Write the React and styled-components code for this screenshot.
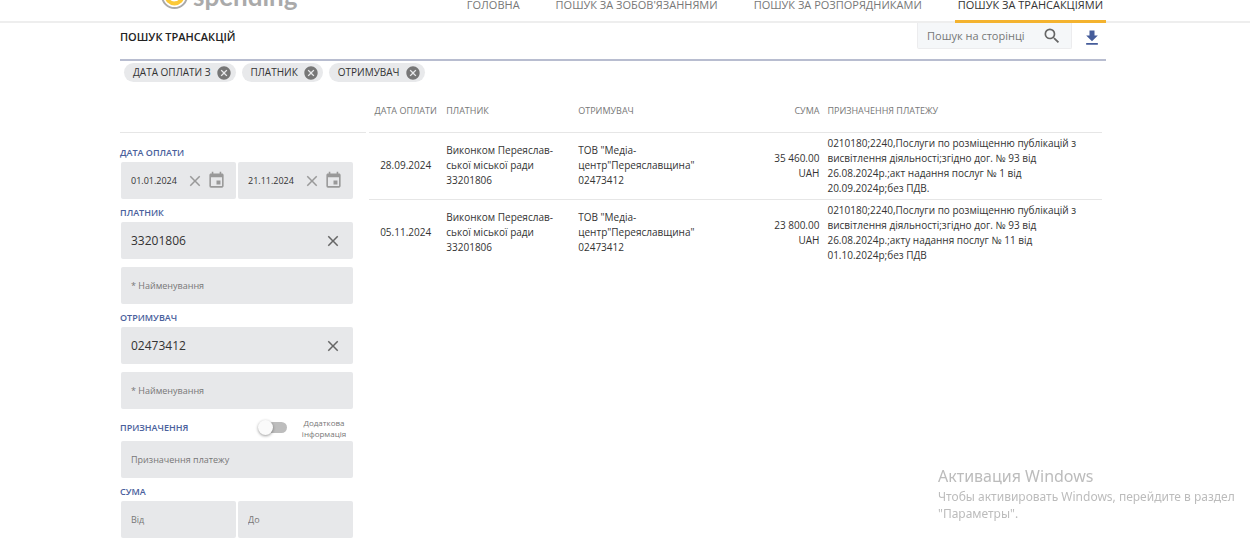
import React, { useState } from 'react';
import styled, { createGlobalStyle } from 'styled-components';
import { MdCancel, MdClose, MdEvent, MdFileDownload, MdSearch } from 'react-icons/md';

const GlobalStyle = createGlobalStyle`
  *, *::before, *::after { box-sizing: border-box; }
  body {
    margin: 0;
    background: #fff;
    color: #333;
    font-family: "Open Sans", "Noto Sans", sans-serif;
    font-size: 10px;
    line-height: 15px;
  }
  button, input { font-family: inherit; }
`;

const Header = styled.header`
  display: flex;
  align-items: flex-end;
  justify-content: space-between;
  height: 23px;
  padding: 0 144px 0 160px;
  overflow: hidden;
  background: #fff;
  box-shadow: inset 0 -2px #eee;
`;

const Brand = styled.a`
  display: flex;
  align-items: center;
  gap: 4px;
  padding-bottom: 13px;
  color: #aaa;
  font-family: Lato, sans-serif;
  font-size: 26px;
  font-weight: 700;
  line-height: 26px;
  text-decoration: none;
  svg { flex: none; }
`;

const Nav = styled.nav`
  display: flex;
  gap: 30px;
`;

const NavLink = styled.a`
  padding: 0 3px 9px;
  border-bottom: 3px solid ${(p) => (p.$active ? '#f4b32f' : 'transparent')};
  color: ${(p) => (p.$active ? '#333' : '#777')};
  font-size: 11px;
  line-height: 12px;
  text-decoration: none;
  white-space: nowrap;
`;

const Page = styled.main`
  padding: 0 144px 0 120px;
`;

const TitleBar = styled.div`
  display: flex;
  align-items: flex-start;
  height: 38px;
  border-bottom: 2px solid #b8bdd0;
`;

const Title = styled.h1`
  flex: 1;
  margin: 0;
  padding-top: 6px;
  color: #222;
  font-size: 11px;
  font-weight: 600;
  line-height: 16px;
`;

const SearchBox = styled.label`
  display: flex;
  align-items: center;
  width: 155px;
  height: 26px;
  padding: 0 9px;
  background: #f5f7f9;
  border: 1px solid #ececee;
  border-top: 0;
  border-radius: 0 0 2px 2px;
  color: #666;
`;

const SearchInput = styled.input`
  flex: 1;
  min-width: 0;
  padding: 0;
  border: 0;
  outline: 0;
  background: none;
  font-size: 11px;
  &::placeholder { color: #777; opacity: 1; }
`;

const IconButton = styled.button`
  display: flex;
  flex: none;
  padding: 0;
  border: 0;
  background: none;
  color: ${(p) => p.$color || '#666'};
  cursor: pointer;
`;

const Download = styled(IconButton)`
  padding: 5px 4px 0 10px;
`;

const Chips = styled.div`
  display: flex;
  gap: 6px;
  padding: 2px 4px 0;
`;

const Chip = styled.span`
  display: flex;
  align-items: center;
  gap: 5px;
  height: 19px;
  padding: 0 4px 0 9px;
  border-radius: 10px;
  background: #e8e9eb;
  color: #333;
  font-size: 10px;
`;

const Columns = styled.div`
  display: flex;
  gap: 3px;
  padding-right: 4px;
`;

const Sidebar = styled.form`
  flex: none;
  width: 246px;
  padding-top: 50px;
`;

const Filters = styled.div`
  display: flex;
  flex-direction: column;
  padding: 12px 13px 8px 1px;
  border-top: 1px solid #e6e6e6;
`;

const Group = styled.section`
  display: flex;
  flex-direction: column;
  gap: 8px;
  & + & { margin-top: 6px; }
`;

const GroupHead = styled.div`
  display: flex;
  align-items: center;
  margin: 0 0 -7px -1px;
  min-height: ${(p) => (p.$tall ? '25px' : '16px')};
`;

const GroupTitle = styled.h2`
  flex: 1;
  margin: 0;
  color: #4a609c;
  font-size: 9px;
  font-weight: 600;
  line-height: 16px;
`;

const Pair = styled.div`
  display: grid;
  grid-template-columns: 1fr 1fr;
  gap: 2px;
`;

const Field = styled.div`
  display: flex;
  align-items: center;
  gap: 3px;
  height: 37px;
  padding: 0 ${(p) => (p.$date ? '10px' : '11px')} 0 10px;
  border-radius: 2px;
  background: #e7e8ea;
`;

const Input = styled.input`
  flex: 1;
  min-width: 0;
  width: 0;
  padding: 0;
  border: 0;
  outline: 0;
  background: none;
  color: #333;
  font-size: ${(p) => p.$size || 9}px;
  &::placeholder { color: #777; opacity: 1; }
`;

const SwitchLabel = styled.label`
  display: flex;
  align-items: center;
  gap: 14px;
  color: #777;
  font-size: 8px;
  line-height: 11px;
  text-align: center;
  span { width: 46px; margin-right: 6px; }
`;

const Switch = styled.input`
  appearance: none;
  display: flex;
  align-items: center;
  width: 26px;
  height: 11px;
  margin: 0;
  border-radius: 6px;
  background: #bdbdbd;
  &::before {
    content: "";
    flex: none;
    width: 15px;
    height: 15px;
    margin: 0 -3px;
    border-radius: 50%;
    background: #fafafa;
    box-shadow: 0 1px 3px rgba(0, 0, 0, 0.4);
  }
  &:checked { justify-content: flex-end; }
`;

const TableWrap = styled.div`
  flex: 1;
  min-width: 0;
`;

const Table = styled.table`
  width: 100%;
  border-collapse: collapse;
  table-layout: fixed;
`;

const Th = styled.th`
  width: ${(p) => p.$w || 'auto'};
  height: 50px;
  padding: 8px 4px 0;
  border-bottom: 1px solid #e6e6e6;
  color: #777;
  font-size: 9px;
  font-weight: 400;
  text-align: ${(p) => p.$align || 'left'};
  white-space: nowrap;
`;

const Td = styled.td`
  padding: 3px 4px;
  text-align: ${(p) => p.$align || 'left'};
  vertical-align: middle;
  tr + tr > & { border-top: 1px solid #e6e6e6; }
`;

const Activation = styled.aside`
  position: fixed;
  right: 8px;
  bottom: 26px;
  width: 304px;
  color: #bcbcbc;
  font-family: "Noto Sans", sans-serif;
  font-size: 12px;
  line-height: 17px;
  pointer-events: none;
  strong {
    display: block;
    font-size: 16px;
    font-weight: 400;
    line-height: 24px;
  }
`;

const navItems = ['ГОЛОВНА', "ПОШУК ЗА ЗОБОВ'ЯЗАННЯМИ", 'ПОШУК ЗА РОЗПОРЯДНИКАМИ', 'ПОШУК ЗА ТРАНСАКЦІЯМИ'];
const chips = ['ДАТА ОПЛАТИ З', 'ПЛАТНИК', 'ОТРИМУВАЧ'];
const payments = [
  {
    date: '28.09.2024',
    sum: '35\u00a0460.00 UAH',
    purpose: '0210180;2240,Послуги по розміщенню публікацій з висвітлення діяльності;згідно дог. № 93 від 26.08.2024р.;акт надання послуг № 1 від 20.09.2024р;без ПДВ.',
  },
  {
    date: '05.11.2024',
    sum: '23\u00a0800.00 UAH',
    purpose: '0210180;2240,Послуги по розміщенню публікацій з висвітлення діяльності;згідно дог. № 93 від 26.08.2024р.;акту надання послуг № 11 від 01.10.2024р;без ПДВ',
  },
];

function DateField({ label, initial }) {
  const [value, setValue] = useState(initial);
  return (
    <Field $date>
      <Input aria-label={label} value={value} onChange={(e) => setValue(e.target.value)} />
      <IconButton type="button" aria-label="Очистити" $color="#999" onClick={() => setValue('')}><MdClose size={18} /></IconButton>
      <IconButton type="button" aria-label="Календар" $color="#999"><MdEvent size={19} /></IconButton>
    </Field>
  );
}

function CodeField({ label, initial }) {
  const [value, setValue] = useState(initial);
  return (
    <Field>
      <Input $size={12} aria-label={label} value={value} onChange={(e) => setValue(e.target.value)} />
      <IconButton type="button" aria-label="Очистити" onClick={() => setValue('')}><MdClose size={18} /></IconButton>
    </Field>
  );
}

function TextField({ placeholder }) {
  return <Field><Input aria-label={placeholder} placeholder={placeholder} /></Field>;
}

export default function App() {
  return (
    <>
      <GlobalStyle />
      <Header>
        <Brand href="#">
          <svg width="29" height="29" viewBox="0 0 29 29" aria-hidden="true">
            <circle cx="14.5" cy="14.5" r="12.5" fill="#fff" stroke="#aaa" strokeWidth="2" />
            <circle cx="14.5" cy="14.5" r="10" fill="#fcc937" />
            <path d="M18 11c-1-2-7-2-7 1s7 2 7 5-6 3-7 1" fill="none" stroke="#fff" strokeWidth="2" />
          </svg>
          spending
        </Brand>
        <Nav>
          {navItems.map((item, i) => <NavLink key={item} href="#" $active={i === 3}>{item}</NavLink>)}
        </Nav>
      </Header>
      <Page>
        <TitleBar>
          <Title>ПОШУК ТРАНСАКЦІЙ</Title>
          <SearchBox>
            <SearchInput placeholder="Пошук на сторінці" aria-label="Пошук на сторінці" />
            <MdSearch size={20} />
          </SearchBox>
          <Download type="button" aria-label="Завантажити" $color="#455c9a"><MdFileDownload size={20} /></Download>
        </TitleBar>
        <Chips>
          {chips.map((chip) => (
            <Chip key={chip}>
              {chip}
              <IconButton type="button" aria-label={`Прибрати ${chip}`} $color="#777"><MdCancel size={16} /></IconButton>
            </Chip>
          ))}
        </Chips>
        <Columns>
          <Sidebar>
            <Filters>
              <Group>
                <GroupHead><GroupTitle>ДАТА ОПЛАТИ</GroupTitle></GroupHead>
                <Pair>
                  <DateField label="Дата з" initial="01.01.2024" />
                  <DateField label="Дата по" initial="21.11.2024" />
                </Pair>
              </Group>
              <Group>
                <GroupHead><GroupTitle>ПЛАТНИК</GroupTitle></GroupHead>
                <CodeField label="Код платника" initial="33201806" />
                <TextField placeholder="* Найменування" />
              </Group>
              <Group>
                <GroupHead><GroupTitle>ОТРИМУВАЧ</GroupTitle></GroupHead>
                <CodeField label="Код отримувача" initial="02473412" />
                <TextField placeholder="* Найменування" />
              </Group>
              <Group>
                <GroupHead $tall>
                  <GroupTitle>ПРИЗНАЧЕННЯ</GroupTitle>
                  <SwitchLabel>
                    <Switch type="checkbox" />
                    <span>Додаткова інформація</span>
                  </SwitchLabel>
                </GroupHead>
                <TextField placeholder="Призначення платежу" />
              </Group>
              <Group>
                <GroupHead><GroupTitle>СУМА</GroupTitle></GroupHead>
                <Pair>
                  <TextField placeholder="Від" />
                  <TextField placeholder="До" />
                </Pair>
              </Group>
            </Filters>
          </Sidebar>
          <TableWrap>
            <Table>
              <thead>
                <tr>
                  <Th $w="10%" $align="center">ДАТА ОПЛАТИ</Th>
                  <Th $w="18%">ПЛАТНИК</Th>
                  <Th $w="24%">ОТРИМУВАЧ</Th>
                  <Th $w="10%" $align="right">СУМА</Th>
                  <Th $w="38%">ПРИЗНАЧЕННЯ ПЛАТЕЖУ</Th>
                </tr>
              </thead>
              <tbody>
                {payments.map((p) => (
                  <tr key={p.date}>
                    <Td $align="center">{p.date}</Td>
                    <Td>Виконком Переяслав&shy;ської міської ради<br />33201806</Td>
                    <Td>ТОВ "Медіа-<br />центр"Переяславщина"<br />02473412</Td>
                    <Td $align="right">{p.sum}</Td>
                    <Td>{p.purpose}</Td>
                  </tr>
                ))}
              </tbody>
            </Table>
          </TableWrap>
        </Columns>
      </Page>
      <Activation>
        <strong>Активация Windows</strong>
        Чтобы активировать Windows, перейдите в раздел "Параметры".
      </Activation>
    </>
  );
}
